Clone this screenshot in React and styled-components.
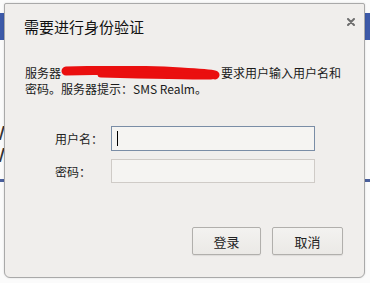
import React from 'react'
import styled, { createGlobalStyle } from 'styled-components'

const GlobalStyle = createGlobalStyle`
  html, body { margin: 0; padding: 0; background: #ffffff; }
  body { font-family: "Noto Sans CJK SC", "Noto Sans", sans-serif; color: #222; }
`

const Page = styled.div`
  position: relative;
  width: 370px;
  height: 283px;
  overflow: hidden;
  background: #fbfbfb;
`

const Backdrop = styled.div`
  display: flex;
  flex-direction: column;
  padding-top: 13px;
`

const BlueBar = styled.div`
  height: 27px;
  background: #3d5aa9;
`

const BackLines = styled.div`
  margin-top: 82px;
  display: flex;
  flex-direction: column;
  font-family: "Liberation Sans", sans-serif;
  font-size: 20px;
  line-height: 22px;
  color: #333;
`

const BackLine = styled.div`
  display: flex;
  justify-content: space-between;
  margin: 0 -12px 0 -14px;
`

const BlueRule = styled.div`
  margin-top: 13px;
  height: 3px;
  background: #4a5f9c;
`

const Dialog = styled.div`
  position: absolute;
  top: 3px;
  left: 4px;
  width: 359px;
  height: 273px;
  display: flex;
  flex-direction: column;
  background: #f0eeec;
  border: 1px solid #a9a9a9;
  border-radius: 2px 2px 6px 6px;
  box-shadow: 0 0 2px rgba(0, 0, 0, 0.15);
`

const Header = styled.div`
  display: flex;
  justify-content: space-between;
  align-items: flex-start;
  padding: 13px 9px 0 19px;
`

const Title = styled.div`
  font-size: 15px;
  line-height: 20px;
  color: #111;
`

const Close = styled.svg`
  width: 8px;
  height: 8px;
  margin-top: 1px;
`

const Message = styled.div`
  margin: 28px 0 0 20px;
  font-size: 12px;
  line-height: 16px;
  color: #1a1a1a;
`

const Redacted = styled.svg`
  display: inline-block;
  width: 160px;
  height: 15px;
  vertical-align: -3px;
`

const Form = styled.div`
  display: grid;
  grid-template-columns: 56px 204px;
  row-gap: 8px;
  align-items: center;
  margin: 29px 0 0 50px;
`

const Label = styled.label`
  font-size: 12px;
  color: #222;
`

const Input = styled.input`
  box-sizing: border-box;
  width: 204px;
  height: 24px;
  border: 1px solid #cfcbc7;
  background: #f5f4f2;
  outline: none;
  padding: 0 6px;
  font-size: 12px;
`

const Caret = styled.span`
  display: block;
  width: 1px;
  height: 15px;
  background: #000;
`

const FocusBox = styled.div`
  box-sizing: border-box;
  width: 204px;
  height: 25px;
  border: 1px solid #7a8da6;
  background: #f5f4f2;
  display: flex;
  align-items: center;
  padding-left: 5px;
`

const Actions = styled.div`
  display: flex;
  justify-content: flex-end;
  gap: 11px;
  margin-top: auto;
  padding: 0 21px 22px 0;
`

const Button = styled.button`
  box-sizing: border-box;
  width: ${p => p.$w}px;
  height: 28px;
  border: 1px solid #b1afac;
  border-radius: 2px;
  background: linear-gradient(#f3f2f0, #ebe9e6);
  box-shadow: 0 1px 1px rgba(0, 0, 0, 0.08);
  font-family: inherit;
  font-size: 13px;
  color: #222;
  padding: 0;
`

export default function App() {
  return (
    <Page>
      <GlobalStyle />
      <Backdrop>
        <BlueBar />
        <BackLines>
          <BackLine><span>W</span><span>e</span></BackLine>
          <BackLine><span>W</span><span>e</span></BackLine>
        </BackLines>
        <BlueRule />
      </Backdrop>
      <Dialog>
        <Header>
          <Title>需要进行身份验证</Title>
          <Close viewBox="0 0 8 8">
            <path d="M1 1L7 7M7 1L1 7" stroke="#6e6e6e" strokeWidth="2" strokeLinecap="round" />
          </Close>
        </Header>
        <Message>
          服务器
          <Redacted viewBox="0 0 160 15">
            <path
              d="M5 5 C40 4 90 4 120 6 C138 7 150 8 154 9"
              fill="none"
              stroke="#ea0f0f"
              strokeWidth="9"
              strokeLinecap="round"
            />
            <path
              d="M40 8 C80 9 120 10 150 10"
              fill="none"
              stroke="#ea0f0f"
              strokeWidth="7"
              strokeLinecap="round"
            />
          </Redacted>
          要求用户输入用户名和
          <br />
          密码。服务器提示：SMS Realm。
        </Message>
        <Form>
          <Label>用户名：</Label>
          <FocusBox><Caret /></FocusBox>
          <Label>密码：</Label>
          <Input type="password" />
        </Form>
        <Actions>
          <Button $w={69}>登录</Button>
          <Button $w={71}>取消</Button>
        </Actions>
      </Dialog>
    </Page>
  )
}
